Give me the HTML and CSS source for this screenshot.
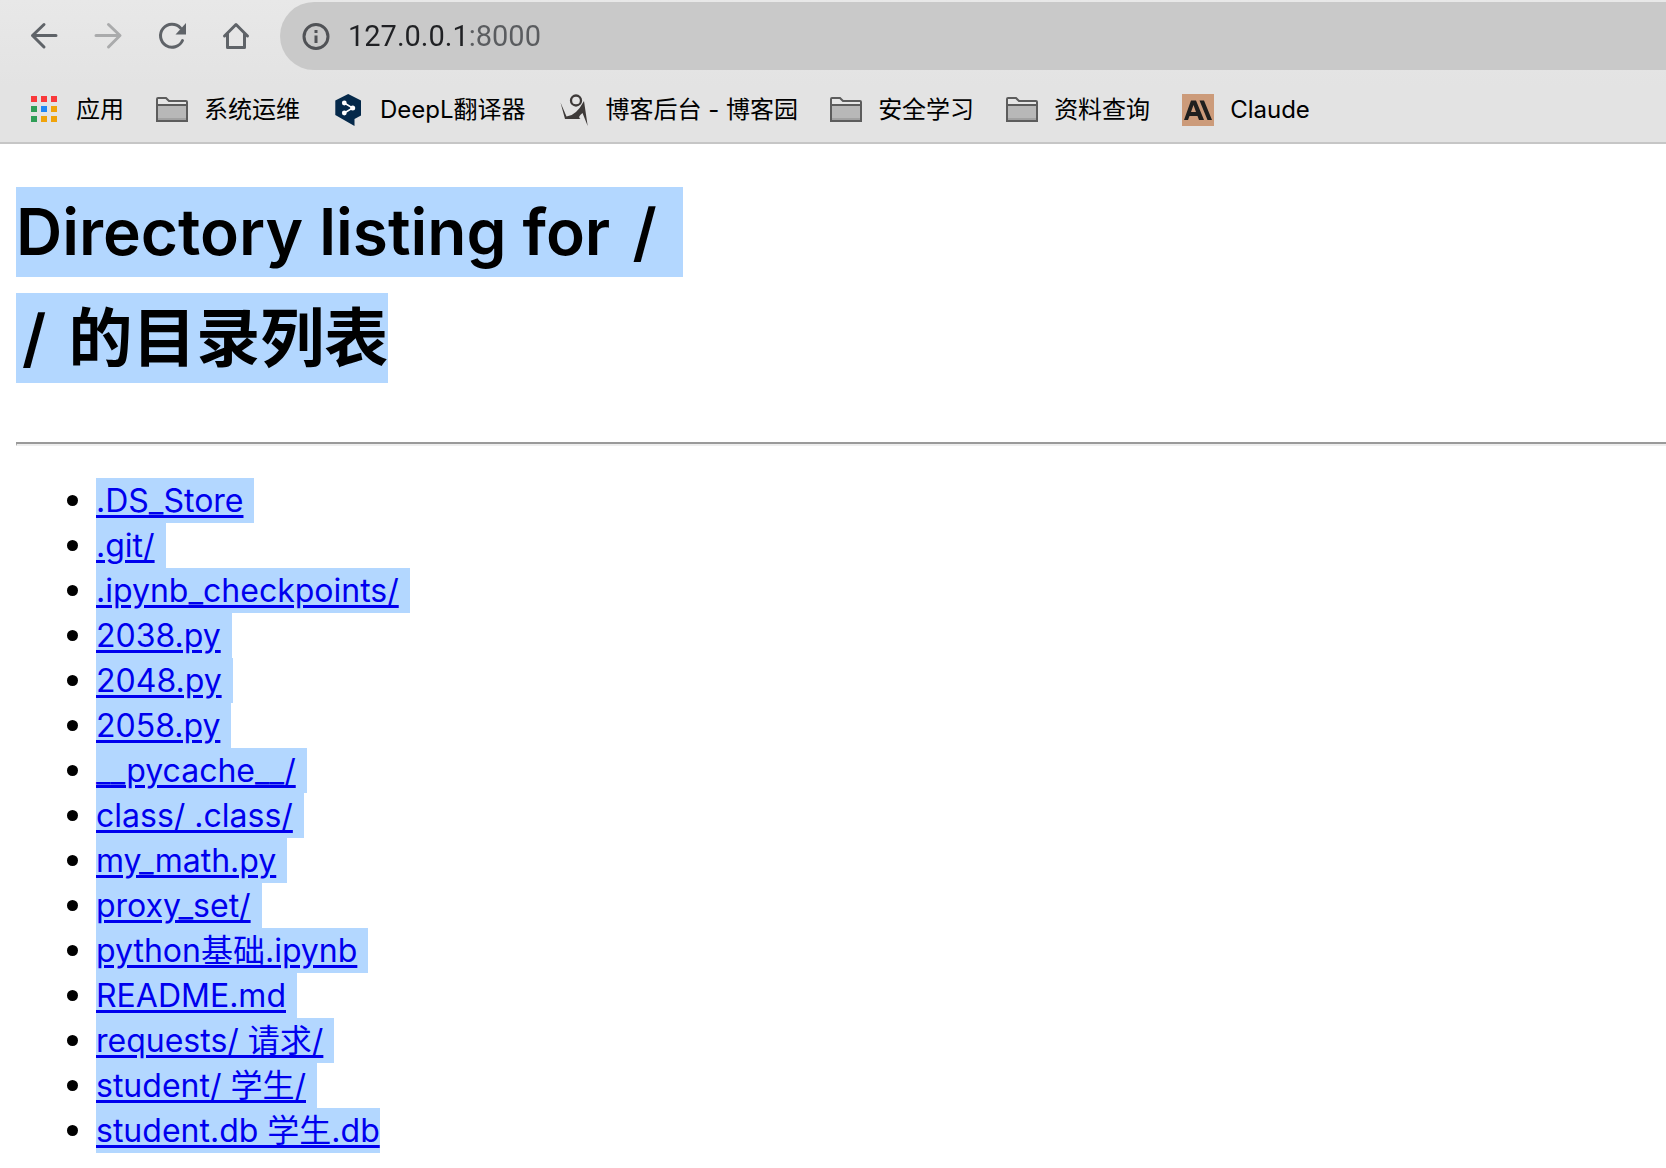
FILE: index.html
```html
<!DOCTYPE html>
<html lang="zh-CN">
<head>
<meta charset="utf-8">
<title>Directory listing for /</title>
<link rel="stylesheet" href="styles.css">
</head>
<body>
<header class="chrome">
  <div class="toolbar">
    <nav class="nav">
      <button class="icon-button" type="button" aria-label="后退"><svg class="icon" viewBox="0 0 32 32"><path class="stroke" d="M28 15.500H4.500M16 4.500L4.500 15.500L16 27"/></svg></button>
      <button class="icon-button icon-button-off" type="button" aria-label="前进" disabled><svg class="icon" viewBox="0 0 32 32"><path class="stroke" d="M4 15.500H27.500M16.500 4.500L28 15.500L16.500 27"/></svg></button>
      <button class="icon-button" type="button" aria-label="重新加载"><svg class="icon" viewBox="0 0 32 32"><path class="stroke" d="M26.500 20.500A11.500 11.500 0 1 1 24.500 8"/><path class="fill" d="M30 3V14.500H19.500Z"/></svg></button>
      <button class="icon-button" type="button" aria-label="主页"><svg class="icon" viewBox="0 0 32 32"><path class="stroke" d="M4.500 16L16 4.500L27.500 16M7.500 14V27.500H24.500V14"/></svg></button>
    </nav>
    <form class="address">
      <svg class="icon" viewBox="0 0 32 32"><circle class="stroke" cx="16" cy="16.500" r="12"/><path class="fill" d="M14.500 10H17.500V13H14.500ZM14.500 15.500H17.500V23H14.500Z"/></svg>
      <input class="address-input" type="text" aria-label="地址" value="127.0.0.1:8000">
    </form>
  </div>
  <nav class="bookmarks">
    <a class="bookmark" href="#"><svg class="icon" viewBox="0 0 32 32"><path fill="#f9393b" d="M3 2h6v6H3zM13 2h6v6h-6zM23 2h6v6h-6z"/><path fill="#2f9e57" d="M3 12h6v6H3zM3 22h6v6H3z"/><path fill="#1f87f5" d="M13 12h6v6h-6z"/><path fill="#f0a30a" d="M23 12h6v6h-6zM13 22h6v6h-6zM23 22h6v6h-6z"/></svg>应用</a>
    <a class="bookmark" href="#"><svg class="icon"><use href="#folder"/></svg>系统运维</a>
    <a class="bookmark" href="#"><svg class="icon" viewBox="0 0 32 32"><path fill="#05294a" d="M16.200 0L29 6.500V21.500L22.500 25V32L3.300 21V6.500Z"/><path stroke="#fff" stroke-width="1.500" fill="none" d="M12.300 9L20.700 14L12.300 19"/><g fill="#fff"><circle cx="12.300" cy="9" r="2.400"/><circle cx="20.700" cy="14" r="2.500"/><circle cx="12.300" cy="19" r="2.400"/></g></svg>DeepL翻译器</a>
    <a class="bookmark" href="#"><svg class="icon" viewBox="0 0 32 32"><circle cx="18" cy="6.500" r="5" fill="none" stroke="#3e3a39" stroke-width="2.300"/><path fill="#3e3a39" d="M2.500 8.500L8.500 22.500Q18 22 26 7L29.700 32L24.500 19Q19 23 22.500 25H7Z"/></svg>博客后台 - 博客园</a>
    <a class="bookmark" href="#"><svg class="icon"><use href="#folder"/></svg>安全学习</a>
    <a class="bookmark" href="#"><svg class="icon"><use href="#folder"/></svg>资料查询</a>
    <a class="bookmark" href="#"><svg class="icon" viewBox="0 0 32 32"><path fill="#cc9b7a" d="M0 0h32v32H0z"/><path fill="#1f1f1e" fill-rule="evenodd" d="M9 6.500H14L22 26H17L15.500 22H7.500L6 26H2ZM11.500 11L9 18H14ZM17.500 6.500H22L30 26H25.500Z"/></svg>Claude</a>
  </nav>
</header>
<svg class="sprite" aria-hidden="true"><symbol id="folder" viewBox="0 0 32 32"><path fill="#e6e6e6" stroke="#5c5c5c" stroke-width="2" d="M1 27V5Q1 4 2 4H10L13 7H30Q31 7 31 8V27Z"/><path fill="#b8b8b8" stroke="#5c5c5c" stroke-width="2" d="M1 11H31V27H1Z"/><path fill="#a2a2a2" d="M2 24H30V26H2Z"/></symbol></svg>
<main class="page">
  <h1 class="title"><span class="title-line"><span class="marked marked-more">Directory listing for <span class="path">/</span></span></span><span class="title-line"><span class="marked"><span class="path">/</span> 的目录列表</span></span></h1>
  <hr class="rule">
  <ul class="files">
    <li><span class="marked marked-more"><a href="#">.DS_Store</a></span></li>
    <li><span class="marked marked-more"><a href="#">.git/</a></span></li>
    <li><span class="marked marked-more"><a href="#">.ipynb_checkpoints/</a></span></li>
    <li><span class="marked marked-more"><a href="#">2038.py</a></span></li>
    <li><span class="marked marked-more"><a href="#">2048.py</a></span></li>
    <li><span class="marked marked-more"><a href="#">2058.py</a></span></li>
    <li><span class="marked marked-more"><a href="#">__pycache__/</a></span></li>
    <li><span class="marked marked-more"><a href="#">class/ .class/</a></span></li>
    <li><span class="marked marked-more"><a href="#">my_math.py</a></span></li>
    <li><span class="marked marked-more"><a href="#">proxy_set/</a></span></li>
    <li><span class="marked marked-more"><a href="#">python基础.ipynb</a></span></li>
    <li><span class="marked marked-more"><a href="#">README.md</a></span></li>
    <li><span class="marked marked-more"><a href="#">requests/ 请求/</a></span></li>
    <li><span class="marked marked-more"><a href="#">student/ 学生/</a></span></li>
    <li><span class="marked"><a href="#">student.db 学生.db</a></span></li>
  </ul>
</main>
</body>
</html>
```
FILE: styles.css
```css
body {
  margin: 0;
  background: #fff;
  color: #000;
  font-family: Inter, "Noto Sans CJK SC", sans-serif;
}
.chrome {
  background: linear-gradient(#e8e8e8, #e3e3e3 60%);
  border-bottom: 2px solid #c6c6c6;
}
.toolbar {
  display: flex;
  align-items: center;
  gap: 28px;
  padding: 2px 0 0 28px;
}
.nav {
  display: flex;
  gap: 32px;
}
.icon {
  display: block;
  flex: none;
  width: 32px;
  height: 32px;
}
.icon-button {
  padding: 0;
  border: 0;
  background: none;
  color: #5f6368;
}
.icon-button-off {
  color: #aaabac;
}
.stroke {
  fill: none;
  stroke: currentColor;
  stroke-width: 3;
  stroke-linecap: round;
  stroke-linejoin: round;
}
.fill {
  fill: currentColor;
}
.address {
  flex: 1;
  display: flex;
  align-items: center;
  gap: 16px;
  height: 68px;
  padding-left: 20px;
  border-radius: 34px 0 0 34px;
  background: #c9c9c9;
  color: #505256;
}
.address-input {
  flex: 1;
  min-width: 0;
  padding: 0;
  border: 0;
  outline: 0;
  background: linear-gradient(90deg, #202124 120px, #5a5c5f 120px);
  background-clip: text;
  color: transparent;
  font: 29px/40px Roboto, sans-serif;
}
.bookmarks {
  display: flex;
  gap: 32px;
  padding: 18px 28px 10px;
}
.bookmark {
  display: flex;
  align-items: center;
  gap: 16px;
  padding: 6px 0;
  color: #000;
  font-size: 24px;
  line-height: 32px;
  text-decoration: none;
  white-space: nowrap;
}
.sprite {
  display: none;
}
.page {
  padding-left: 16px;
}
.title {
  display: flex;
  flex-direction: column;
  gap: 16px;
  margin: 43px 0 59px;
  font-size: 64px;
  line-height: 90px;
  font-weight: 600;
}
.title-line {
  display: flex;
}
.path {
  padding: 0 6px;
}
.marked {
  background: #b3d7ff;
}
.title .marked-more {
  padding-right: 20px;
}
.rule {
  margin: 0;
  border: 0;
  border-top: 2px solid #9a9a9a;
  border-left: 1px solid #9a9a9a;
  border-bottom: 2px solid #eee;
}
.files {
  margin: 32px 0;
  padding-left: 51px;
  font-size: 32px;
  line-height: 45px;
  list-style: none;
}
.files li {
  display: flex;
  align-items: center;
  gap: 18px;
}
.files li::before {
  content: "";
  width: 11px;
  height: 11px;
  border-radius: 50%;
  background: #000;
}
.files .marked-more {
  padding-right: 11px;
}
.files a {
  color: #00e;
  text-decoration-thickness: 3px;
  text-underline-offset: 3px;
}
```
